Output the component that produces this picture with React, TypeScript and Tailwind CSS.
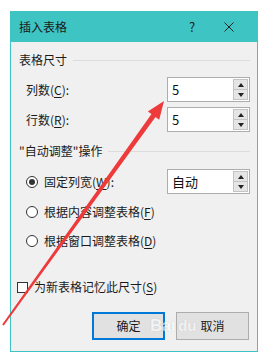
import React from 'react';

const FONT = { fontFamily: '"Noto Sans CJK SC", "Liberation Sans", sans-serif' };

function U({ children }: { children: React.ReactNode }) {
  return <span className="underline underline-offset-2">{children}</span>;
}

function Spin({ value }: { value: string }) {
  return (
    <div className="w-[83px] h-[25px] bg-white border border-[#adadad] flex">
      <div className="flex-1 pl-[4px] flex items-center text-[13px] text-[#111]">{value}</div>
      <div className="w-[15px] my-[1px] mr-[1px] flex flex-col">
        <div className="flex-1 bg-[#e5e5e5] border border-[#c4c4c4] flex items-center justify-center">
          <svg width="6" height="4" viewBox="0 0 6 4"><path d="M0 4 L3 0 L6 4Z" fill="#222" /></svg>
        </div>
        <div className="flex-1 bg-[#e5e5e5] border border-t-0 border-[#c4c4c4] flex items-center justify-center">
          <svg width="6" height="4" viewBox="0 0 6 4"><path d="M0 0 L3 4 L6 0Z" fill="#222" /></svg>
        </div>
      </div>
    </div>
  );
}

function Radio({ on }: { on?: boolean }) {
  return (
    <div className="w-[12px] h-[12px] rounded-full border border-[#333] bg-white flex items-center justify-center">
      {on && <div className="w-[6px] h-[6px] rounded-full bg-[#333]" />}
    </div>
  );
}

function Heading({ text }: { text: string }) {
  return (
    <div className="flex items-center h-[16px] pl-[8px] pr-[7px] gap-[6px]">
      <span className="whitespace-nowrap">{text}</span>
      <div className="flex-1 h-px bg-[#dcdcdc]" />
    </div>
  );
}

export default function App() {
  return (
    <div className="relative w-[267px] h-[363px] bg-white pt-[11px] pl-[10px] text-[12px] text-[#1a1a1a] leading-[16px]" style={FONT}>
      <div className="w-[248px] h-[341px] border border-[#3ec4c2] flex flex-col">
        <div className="h-[30px] bg-[#3ec4c2] flex items-center pl-[8px] text-[12px]">
          <span className="flex-1">插入表格</span>
          <span className="w-[10px] text-[13px]">?</span>
          <div className="w-[58px] flex justify-center pl-[2px]">
            <svg width="10" height="10" viewBox="0 0 10 10"><path d="M0.5 0.5 L9.5 9.5 M9.5 0.5 L0.5 9.5" stroke="#222" strokeWidth="1" /></svg>
          </div>
        </div>
        <div className="flex-1 bg-[#f0f0f0] flex flex-col">
          <div className="mt-[10px]"><Heading text="表格尺寸" /></div>
          <div className="mt-[9px] flex items-center justify-between pl-[15px] pr-[7px]">
            <span>列数(<U>C</U>):</span>
            <Spin value="5" />
          </div>
          <div className="mt-[5px] flex items-center justify-between pl-[15px] pr-[7px]">
            <span>行数(<U>R</U>):</span>
            <Spin value="5" />
          </div>
          <div className="mt-[11px]"><Heading text={'"自动调整"操作'} /></div>
          <div className="mt-[10px] flex items-center justify-between pl-[15px] pr-[7px]">
            <div className="flex items-center gap-[6px]">
              <Radio on />
              <span>固定列宽(<U>W</U>):</span>
            </div>
            <Spin value="自动" />
          </div>
          <div className="mt-[10px] flex items-center gap-[6px] pl-[15px] h-[16px]">
            <Radio />
            <span>根据内容调整表格(<U>F</U>)</span>
          </div>
          <div className="mt-[13px] flex items-center gap-[6px] pl-[15px] h-[16px]">
            <Radio />
            <span>根据窗口调整表格(<U>D</U>)</span>
          </div>
          <div className="mt-[30px] flex items-center gap-[6px] pl-[6px] h-[16px]">
            <div className="w-[11px] h-[11px] border border-[#333] bg-white" />
            <span>为新表格记忆此尺寸(<U>S</U>)</span>
          </div>
          <div className="mt-[17px] flex justify-end gap-[11px] pr-[8px]">
            <button className="w-[73px] h-[28px] bg-[#e1e1e1] border-2 border-[#0078d7] text-[12px]">确定</button>
            <button className="w-[73px] h-[28px] bg-[#e1e1e1] border border-[#adadad] text-[12px]">取消</button>
          </div>
        </div>
      </div>
      <div className="absolute left-[150px] top-[318px] flex items-end gap-[3px] text-white opacity-60 pointer-events-none" style={{ fontFamily: '"Liberation Sans", sans-serif' }}>
        <span className="text-[17px] font-bold tracking-tight [text-shadow:0_0_1px_#aaa]">Bai</span>
        <span className="text-[15px] font-bold [text-shadow:0_0_1px_#aaa]">du</span>
      </div>
      <svg className="absolute inset-0 pointer-events-none" width="267" height="363" viewBox="0 0 267 363">
        <polygon
          points="2.2,324.4 151.5,114.1 147.8,111.5 164,101 159.2,119.7 155.5,117.1 3.8,325.6"
          fill="#ee3a3a"
        />
      </svg>
    </div>
  );
}
